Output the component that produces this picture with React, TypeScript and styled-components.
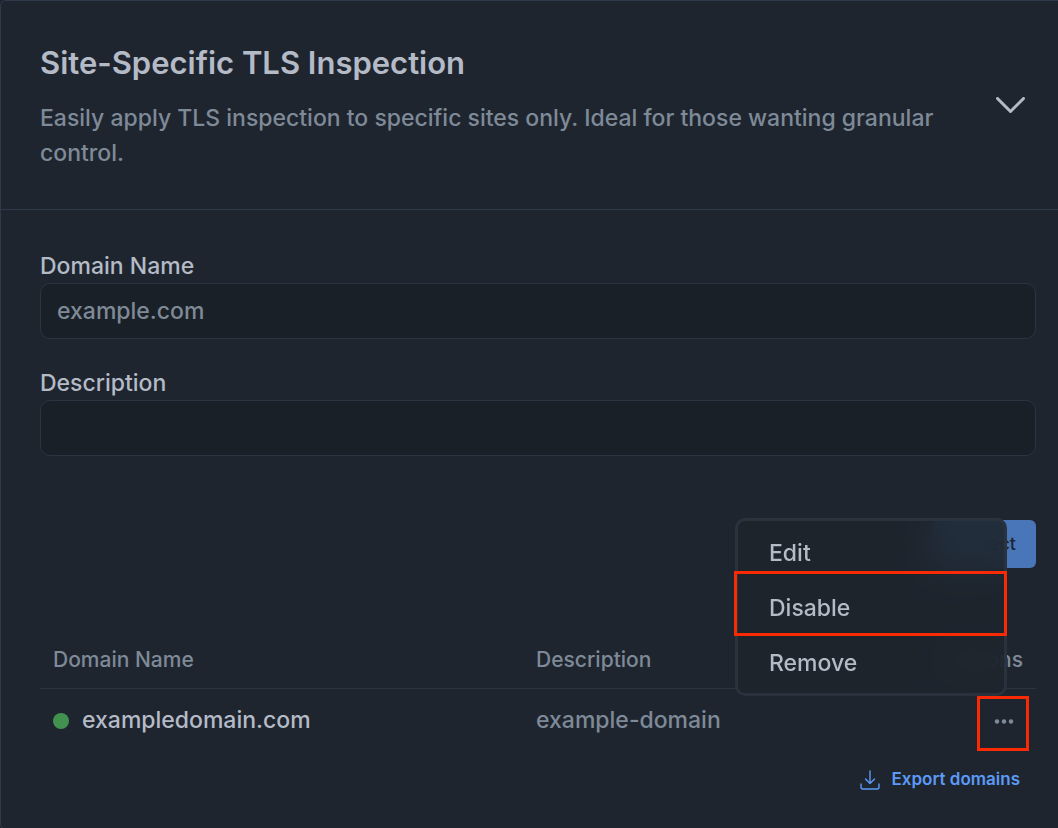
import React from "react";
import styled, { createGlobalStyle } from "styled-components";

const font = `Inter, "Liberation Sans", sans-serif`;

const GlobalStyle = createGlobalStyle`
  *, *::before, *::after { box-sizing: border-box; }
  body {
    margin: 0;
    background: #1f252f;
    color: #b4bbc7;
    font-family: ${font};
    font-size: 23px;
    font-weight: 450;
    line-height: 35px;
  }
  button, input { font-family: inherit; font-weight: inherit; }
`;

const Card = styled.section`
  min-height: 100vh;
  background: #1f252f;
  border: 1px solid #2e394a;
  border-right: 0;
  border-radius: 6px 0 0 6px;
`;

const Header = styled.header`
  display: flex;
  align-items: center;
  justify-content: space-between;
  gap: 48px;
  padding: 40px 32px 38px 39px;
  border-bottom: 1px solid #2e394a;
`;

const Title = styled.h2`
  margin: 0 0 17px;
  font-size: 31px;
  line-height: 43px;
  font-weight: 600;
`;

const Lead = styled.p`
  margin: 0;
  color: #7e8a97;
`;

const IconButton = styled.button`
  display: flex;
  flex: none;
  align-items: center;
  justify-content: center;
  padding: 0;
  border: 0;
  background: none;
  color: #b4bbc7;
`;

const Body = styled.div`
  padding: 39px 22px 32px 39px;
`;

const Field = styled.div`
  display: flex;
  flex-direction: column;
  margin-bottom: 27px;
`;

const Label = styled.label`
  line-height: 34px;
`;

const TextInput = styled.input`
  width: 100%;
  height: 56px;
  padding: 0 16px;
  border: 1px solid #2c3442;
  border-radius: 10px;
  background: #1a2027;
  color: #b4bbc7;
  font-size: 23px;
  &::placeholder { color: #7e8a97; opacity: 1; }
`;

const FormActions = styled.div`
  display: flex;
  justify-content: flex-end;
  margin: 64px 0 63px;
`;

const PrimaryButton = styled.button`
  height: 48px;
  padding: 0 20px 2px;
  border: 0;
  border-radius: 6px;
  background: #4876b8;
  color: #1f252f;
  font-size: 18px;
  font-weight: 500;
`;

const Table = styled.table`
  width: 100%;
  border-collapse: collapse;
  table-layout: fixed;
`;

const HeadCell = styled.th<{ $width?: string; $end?: boolean }>`
  width: ${(p) => p.$width || "auto"};
  height: 57px;
  padding: 0 13px;
  border-bottom: 1px solid #2c3442;
  color: #7e8a97;
  font-size: 21px;
  font-weight: 500;
  text-align: ${(p) => (p.$end ? "right" : "left")};
`;

const Cell = styled.td<{ $muted?: boolean }>`
  height: 65px;
  padding: 0 13px;
  color: ${(p) => (p.$muted ? "#7e8a97" : "#b4bbc7")};
`;

const Domain = styled.span`
  display: flex;
  align-items: center;
  gap: 13px;
`;

const StatusDot = styled.span`
  width: 16px;
  height: 16px;
  border-radius: 50%;
  background: #42924f;
`;

const RowActions = styled.div`
  position: relative;
  display: flex;
  justify-content: flex-end;
`;

const MoreButton = styled(IconButton)`
  position: relative;
  width: 40px;
  height: 40px;
  margin-right: -1px;
  color: #7e8a97;
`;

const Callout = styled.span<{ $inset: string }>`
  position: absolute;
  inset: ${(p) => p.$inset};
  border: 3px solid #fa2a05;
  pointer-events: none;
`;

const Menu = styled.div`
  position: absolute;
  right: 16px;
  bottom: 45px;
  width: 272px;
  padding: 4px 0 3px;
  border: 3px solid #2a323e;
  border-radius: 10px;
  background: rgba(30, 36, 44, 0.88);
  backdrop-filter: blur(16px);
`;

const MenuItem = styled.button`
  position: relative;
  display: block;
  width: 100%;
  height: 55px;
  padding: 1px 31px 0;
  border: 0;
  background: none;
  color: #b4bbc7;
  font-size: 23px;
  text-align: left;
`;

const Footer = styled.footer`
  display: flex;
  justify-content: flex-end;
  padding: 9px 16px 0 0;
`;

const ExportLink = styled.a`
  display: flex;
  align-items: center;
  gap: 12px;
  color: #5b9af5;
  font-size: 17px;
  font-weight: 600;
  text-decoration: none;
`;

export default function App() {
  return (
    <>
      <GlobalStyle />
      <Card>
        <Header>
          <div>
            <Title>Site-Specific TLS Inspection</Title>
            <Lead>
              Easily apply TLS inspection to specific sites only. Ideal for
              those wanting granular control.
            </Lead>
          </div>
          <IconButton type="button" aria-label="Collapse section">
            <svg width="30" height="18" viewBox="0 0 30 18" fill="none" stroke="currentColor" strokeWidth="3" strokeLinecap="round" strokeLinejoin="round">
              <path d="M1.5 1.500l13 13 13-13" />
            </svg>
          </IconButton>
        </Header>
        <Body>
          <Field>
            <Label htmlFor="domain">Domain Name</Label>
            <TextInput id="domain" placeholder="example.com" />
          </Field>
          <Field>
            <Label htmlFor="description">Description</Label>
            <TextInput id="description" />
          </Field>
          <FormActions>
            <PrimaryButton type="button">Inspect</PrimaryButton>
          </FormActions>
          <Table>
            <thead>
              <tr>
                <HeadCell $width="48.5%">Domain Name</HeadCell>
                <HeadCell>Description</HeadCell>
                <HeadCell $width="16%" $end>Actions</HeadCell>
              </tr>
            </thead>
            <tbody>
              <tr>
                <Cell>
                  <Domain>
                    <StatusDot />
                    exampledomain.com
                  </Domain>
                </Cell>
                <Cell $muted>example-domain</Cell>
                <Cell>
                  <RowActions>
                    <MoreButton type="button" aria-label="More actions">
                      <svg width="20" height="6" viewBox="0 0 20 6" fill="currentColor">
                        <circle cx="3" cy="3.5" r="2.200" />
                        <circle cx="10" cy="3.5" r="2.200" />
                        <circle cx="17" cy="3.5" r="2.200" />
                      </svg>
                      <Callout $inset="-5px -5px -10px -7px" />
                    </MoreButton>
                    <Menu>
                      <MenuItem type="button">Edit</MenuItem>
                      <MenuItem type="button">
                        Disable
                        <Callout $inset="-9px -3px -1px -4px" />
                      </MenuItem>
                      <MenuItem type="button">Remove</MenuItem>
                    </Menu>
                  </RowActions>
                </Cell>
              </tr>
            </tbody>
          </Table>
          <Footer>
            <ExportLink href="#export">
              <svg width="20" height="20" viewBox="0 0 20 20" fill="none" stroke="currentColor" strokeWidth="1.4" strokeLinecap="round" strokeLinejoin="round">
                <path d="M10 1v12.500M5.5 9l4.500 4.500L14.500 9M1 14v3a2 2 0 0 0 2 2h14a2 2 0 0 0 2-2v-3" />
              </svg>
              Export domains
            </ExportLink>
          </Footer>
        </Body>
      </Card>
    </>
  );
}
